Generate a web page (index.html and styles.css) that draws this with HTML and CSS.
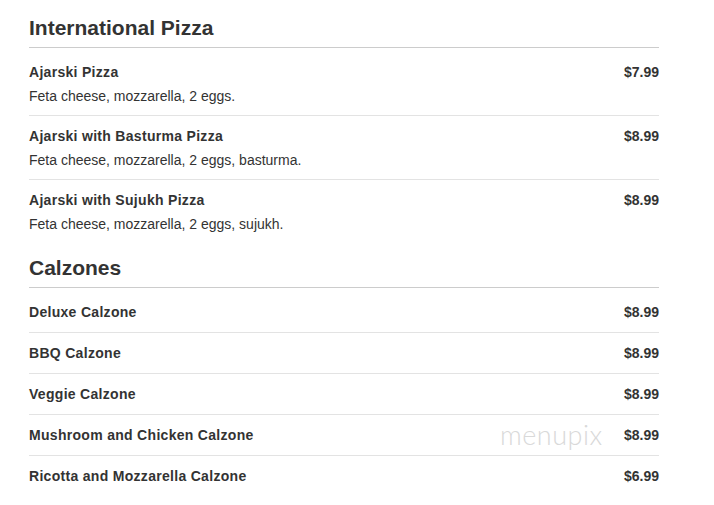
FILE: index.html
```html
<!DOCTYPE html>
<html>
<head>
<meta charset="utf-8">
<link rel="stylesheet" href="styles.css">
</head>
<body>
<div class="menu">
  <section class="section">
    <h2 class="section-title">International Pizza</h2>
    <ul class="items">
      <li class="item">
        <div class="item-row"><span class="name">Ajarski Pizza</span><span class="price">$7.99</span></div>
        <div class="desc">Feta cheese, mozzarella, 2 eggs.</div>
      </li>
      <li class="item">
        <div class="item-row"><span class="name">Ajarski with Basturma Pizza</span><span class="price">$8.99</span></div>
        <div class="desc">Feta cheese, mozzarella, 2 eggs, basturma.</div>
      </li>
      <li class="item">
        <div class="item-row"><span class="name">Ajarski with Sujukh Pizza</span><span class="price">$8.99</span></div>
        <div class="desc">Feta cheese, mozzarella, 2 eggs, sujukh.</div>
      </li>
    </ul>
  </section>
  <section class="section">
    <h2 class="section-title">Calzones</h2>
    <ul class="items">
      <li class="item">
        <div class="item-row"><span class="name">Deluxe Calzone</span><span class="price">$8.99</span></div>
      </li>
      <li class="item">
        <div class="item-row"><span class="name">BBQ Calzone</span><span class="price">$8.99</span></div>
      </li>
      <li class="item">
        <div class="item-row"><span class="name">Veggie Calzone</span><span class="price">$8.99</span></div>
      </li>
      <li class="item">
        <div class="item-row"><span class="name">Mushroom and Chicken Calzone</span><span class="price">$8.99</span></div>
        <span class="watermark">menupix</span>
      </li>
      <li class="item">
        <div class="item-row"><span class="name">Ricotta and Mozzarella Calzone</span><span class="price">$6.99</span></div>
      </li>
    </ul>
  </section>
</div>
</body>
</html>
```

FILE: styles.css
```css
html, body {
  margin: 0;
  padding: 0;
  background: #ffffff;
}

body {
  font-family: "Liberation Sans", Arial, sans-serif;
  color: #333333;
}

.menu {
  width: 630px;
  margin-left: 29px;
  padding-top: 16px;
}

.section + .section {
  margin-top: 13px;
}

.section-title {
  margin: 0;
  font-size: 21px;
  line-height: 24px;
  font-weight: bold;
  color: #333333;
  padding-bottom: 7px;
  border-bottom: 1px solid #cccccc;
}

.items {
  list-style: none;
  margin: 0;
  padding: 4px 0 0 0;
}

.item {
  padding: 10px 0 10px 0;
  border-bottom: 1px solid #e3e3e3;
  position: relative;
}

.item:last-child {
  border-bottom: none;
}

.item-row {
  display: flex;
  justify-content: space-between;
  align-items: center;
  line-height: 20px;
}

.name {
  font-size: 14px;
  font-weight: bold;
  letter-spacing: 0.3px;
  color: #333333;
}

.price {
  font-size: 14px;
  font-weight: bold;
  color: #333333;
  position: relative;
  z-index: 1;
}

.desc {
  margin-top: 4px;
  margin-bottom: -1px;
  font-size: 14px;
  line-height: 20px;
  color: #333333;
}

.watermark {
  position: absolute;
  left: 471px;
  top: 5px;
  font-family: "Lato", "DejaVu Sans", sans-serif;
  font-weight: 300;
  font-size: 27px;
  line-height: 30px;
  letter-spacing: 0.5px;
  color: #d9d9d9;
}
```
